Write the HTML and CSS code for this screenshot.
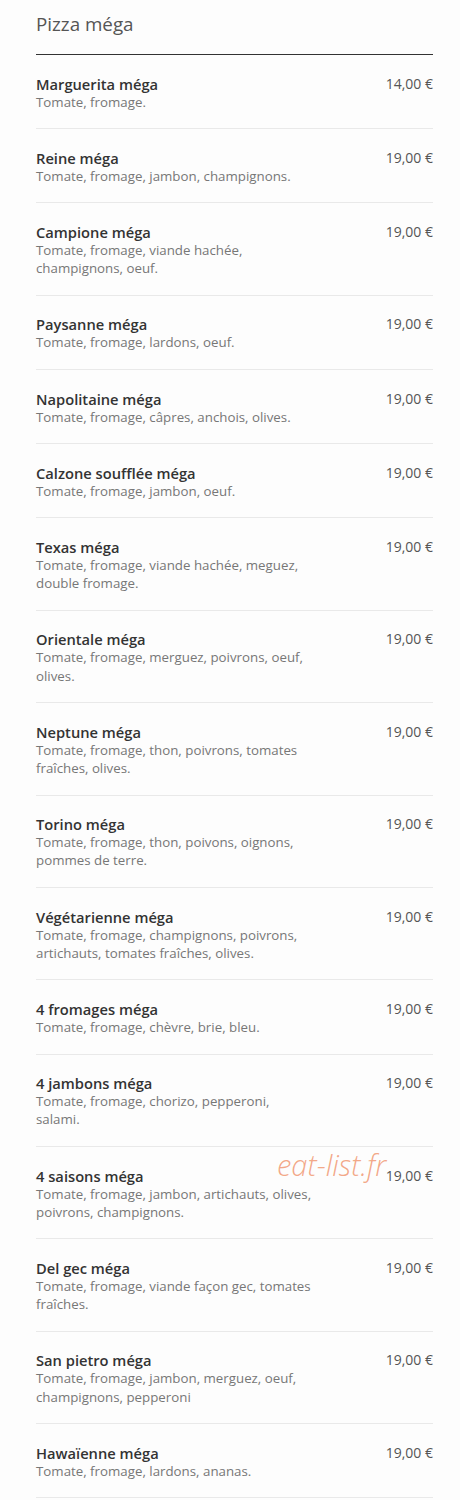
FILE: index.html
```html
<!DOCTYPE html>
<html lang="fr">

<head>
    <meta charset="UTF-8">
    <meta name="viewport" content="width=device-width, initial-scale=1.0">
    <title>Pizza méga</title>
    <link rel="stylesheet" href="styles.css">
</head>

<body>
    <div class="menu">
        <h2 class="menu-title">Pizza méga</h2>
        <ul class="items">
            <li class="item">
                <div class="info">
                    <div class="name">Marguerita méga</div>
                    <div class="desc">Tomate, fromage.</div>
                </div>
                <div class="price">14,00 €</div>
            </li>
            <li class="item">
                <div class="info">
                    <div class="name">Reine méga</div>
                    <div class="desc">Tomate, fromage, jambon, champignons.</div>
                </div>
                <div class="price">19,00 €</div>
            </li>
            <li class="item">
                <div class="info">
                    <div class="name">Campione méga</div>
                    <div class="desc">Tomate, fromage, viande hachée, champignons, oeuf.</div>
                </div>
                <div class="price">19,00 €</div>
            </li>
            <li class="item">
                <div class="info">
                    <div class="name">Paysanne méga</div>
                    <div class="desc">Tomate, fromage, lardons, oeuf.</div>
                </div>
                <div class="price">19,00 €</div>
            </li>
            <li class="item">
                <div class="info">
                    <div class="name">Napolitaine méga</div>
                    <div class="desc">Tomate, fromage, câpres, anchois, olives.</div>
                </div>
                <div class="price">19,00 €</div>
            </li>
            <li class="item">
                <div class="info">
                    <div class="name">Calzone soufflée méga</div>
                    <div class="desc">Tomate, fromage, jambon, oeuf.</div>
                </div>
                <div class="price">19,00 €</div>
            </li>
            <li class="item">
                <div class="info">
                    <div class="name">Texas méga</div>
                    <div class="desc">Tomate, fromage, viande hachée, meguez, double fromage.</div>
                </div>
                <div class="price">19,00 €</div>
            </li>
            <li class="item">
                <div class="info">
                    <div class="name">Orientale méga</div>
                    <div class="desc">Tomate, fromage, merguez, poivrons, oeuf, olives.</div>
                </div>
                <div class="price">19,00 €</div>
            </li>
            <li class="item">
                <div class="info">
                    <div class="name">Neptune méga</div>
                    <div class="desc">Tomate, fromage, thon, poivrons, tomates fraîches, olives.</div>
                </div>
                <div class="price">19,00 €</div>
            </li>
            <li class="item">
                <div class="info">
                    <div class="name">Torino méga</div>
                    <div class="desc">Tomate, fromage, thon, poivons, oignons, pommes de terre.</div>
                </div>
                <div class="price">19,00 €</div>
            </li>
            <li class="item">
                <div class="info">
                    <div class="name">Végétarienne méga</div>
                    <div class="desc">Tomate, fromage, champignons, poivrons, artichauts, tomates fraîches, olives.</div>
                </div>
                <div class="price">19,00 €</div>
            </li>
            <li class="item">
                <div class="info">
                    <div class="name">4 fromages méga</div>
                    <div class="desc">Tomate, fromage, chèvre, brie, bleu.</div>
                </div>
                <div class="price">19,00 €</div>
            </li>
            <li class="item">
                <div class="info">
                    <div class="name">4 jambons méga</div>
                    <div class="desc">Tomate, fromage, chorizo, pepperoni, salami.</div>
                </div>
                <div class="price">19,00 €</div>
            </li>
            <li class="item">
                <div class="info">
                    <div class="name">4 saisons méga</div>
                    <div class="desc">Tomate, fromage, jambon, artichauts, olives, poivrons, champignons.</div>
                </div>
                <div class="price">19,00 €</div>
                <span class="watermark">eat-list.fr</span>
            </li>
            <li class="item">
                <div class="info">
                    <div class="name">Del gec méga</div>
                    <div class="desc">Tomate, fromage, viande façon gec, tomates fraîches.</div>
                </div>
                <div class="price">19,00 €</div>
            </li>
            <li class="item">
                <div class="info">
                    <div class="name">San pietro méga</div>
                    <div class="desc">Tomate, fromage, jambon, merguez, oeuf, champignons, pepperoni</div>
                </div>
                <div class="price">19,00 €</div>
            </li>
            <li class="item">
                <div class="info">
                    <div class="name">Hawaïenne méga</div>
                    <div class="desc">Tomate, fromage, lardons, ananas.</div>
                </div>
                <div class="price">19,00 €</div>
            </li>
        </ul>
    </div>
</body>

</html>
```

FILE: styles.css
```css
* {
    box-sizing: border-box;
    padding: 0;
    margin: 0;
}

body {
    background: #fdfdfd;
    font-family: "Open Sans", "Liberation Sans", sans-serif;
    color: #333;
}

.menu {
    padding: 0 27px 0 36px;
}

.menu-title {
    padding: 12px 0 18px;
    font-size: 18.8px;
    line-height: 24px;
    font-weight: 400;
    color: #555;
    border-bottom: 1px solid #333;
}

.items {
    list-style: none;
}

.item {
    position: relative;
    display: flex;
    justify-content: space-between;
    padding: 19.5px 0 17.5px;
    border-bottom: 1px solid #e9e9e9;
}

.info {
    width: 276px;
}

.name {
    font-size: 14.7px;
    line-height: 18px;
    font-weight: 600;
    color: #333;
}

.desc {
    font-size: 13.3px;
    line-height: 18.2px;
    color: #777;
}

.price {
    font-size: 14px;
    line-height: 18px;
    color: #555;
}

/* watermark stamped over the row */
.watermark {
    position: absolute;
    left: 241px;
    top: 1px;
    font-size: 29px;
    line-height: 34px;
    font-style: italic;
    font-weight: 300;
    color: rgba(240, 145, 105, 0.8);
}
```
